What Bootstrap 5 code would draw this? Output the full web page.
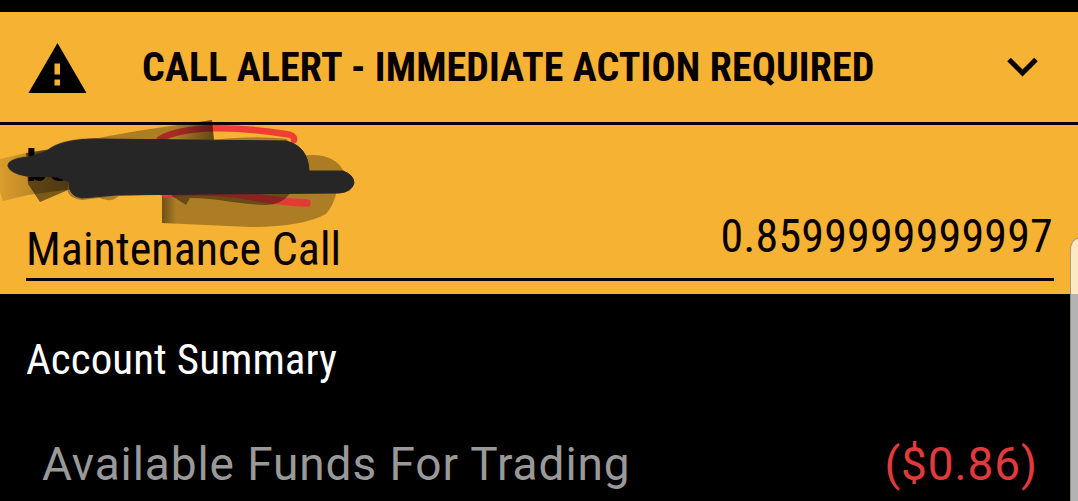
<!DOCTYPE html>
<html lang="en">
<head>
  <meta charset="UTF-8" />
  <meta name="viewport" content="width=device-width, initial-scale=1" />
  <title>Account Summary</title>
  <link href="https://cdn.jsdelivr.net/npm/bootstrap@5.3.0/dist/css/bootstrap.min.css" rel="stylesheet" />
  <style>
    body { background: #000; font-family: Roboto, sans-serif; height: 501px; padding-top: 12px; }
    .condensed { font-family: "Roboto Condensed", Roboto, sans-serif; font-stretch: 75%; }
    .call-alert { background: #f6b233; color: #080002; height: 282px; }
    .alert-bar { height: 113px; border-bottom: 3px solid #10000a; padding: 2px 39px 0 28px; }
    .alert-title { font-size: 40px; line-height: 48px; margin-left: 55px; letter-spacing: .11px; }
    .call-body { height: 156px; margin: 0 24px 0 26px; border-bottom: 3px solid #10000a; }
    .call-name { font-size: 46px; line-height: 54px; margin-bottom: 2px; letter-spacing: .08px; }
    .call-amount { font-size: 46px; line-height: 54px; margin-bottom: 15px; margin-right: 1px; letter-spacing: .17px; }
    .account-mask { left: 0; top: 110px; pointer-events: none; }
    .call-account { font-size: 44px; line-height: 54px; left: 0; top: 14px; }
    .summary-title { font-size: 43px; line-height: 50px; padding: 40px 0 0 26px; color: #fff; letter-spacing: .06px; }
    .funds-row { font-size: 46px; line-height: 54px; padding: 53px 40px 0 42px; color: #999; }
    .funds-label { letter-spacing: .91px; }
    .funds-value { color: #e23a3c; letter-spacing: .9px; }
    .edge-handle { right: 0; top: 238px; width: 8px; height: 263px; border: 1px solid rgba(130, 120, 105, .7); border-width: 1px 0 0 1px; border-top-left-radius: 8px 12px; background: rgba(255, 255, 255, .7); }
  </style>
</head>
<body class="position-relative overflow-hidden">

<section class="call-alert">
  <div class="alert-bar d-flex align-items-center">
    <svg width="59" height="52" viewBox="0 0 59 52" aria-hidden="true">
      <path fill="#000" fill-rule="evenodd" d="M29.5 1 58.5 51H.5ZM26.5 21.500V32.500H32V21.500ZM26.500 37.500V43.500H32V37.500Z" />
    </svg>
    <div class="alert-title condensed fw-bold text-nowrap">CALL ALERT - IMMEDIATE ACTION REQUIRED</div>
    <svg class="ms-auto" width="33" height="22" viewBox="0 0 33 22" aria-hidden="true">
      <path fill="none" stroke="#080002" stroke-width="5" d="M3 2.500 16.500 16 30 2.500" />
    </svg>
  </div>
  <div class="call-body position-relative d-flex justify-content-between align-items-end">
    <div class="call-account condensed fw-bold position-absolute">be</div>
    <div class="call-name condensed">Maintenance Call</div>
    <div class="call-amount condensed">0.8599999999997</div>
  </div>
</section>

<section>
  <div class="summary-title condensed">Account Summary</div>
  <div class="funds-row d-flex justify-content-between">
    <div class="funds-label">Available Funds For Trading</div>
    <div class="funds-value">($0.86)</div>
  </div>
</section>

<!-- marker strokes that hide the account name -->
<svg class="account-mask position-absolute" width="370" height="125" viewBox="0 110 370 125" aria-hidden="true">
  <defs>
    <linearGradient id="shadeLeft"><stop offset="0" stop-color="#000" stop-opacity=".12" /><stop offset="1" stop-color="#000" stop-opacity=".4" /></linearGradient>
    <linearGradient id="shadeRight"><stop offset="0" stop-color="#000" stop-opacity=".3" /><stop offset=".75" stop-color="#000" stop-opacity=".3" /><stop offset="1" stop-color="#000" stop-opacity=".6" /></linearGradient>
    <linearGradient id="shadeLow"><stop offset="0" stop-color="#000" stop-opacity=".55" /><stop offset=".08" stop-color="#000" stop-opacity=".3" /><stop offset="1" stop-color="#000" stop-opacity=".3" /></linearGradient>
  </defs>
  <path fill="none" stroke="#ef3e34" stroke-width="6.5" stroke-linecap="round" d="M160 139C185 125 235 126 286 134Q295 135 294 140" />
  <path fill="url(#shadeLeft)" d="M0 159 26 153 48 150 80 188 28 195 3 201 0 192Z" />
  <path fill="#000" fill-opacity=".5" d="M26 153 50 149 85 187 68 190 40 202 28 184Z" />
  <path fill="url(#shadeRight)" d="M60 146Q110 135 150 129L212 120 214 140 70 150Z" />
  <path fill="#000" fill-opacity=".3" d="M213 140Q255 135 287 139L290 145 213 145ZM300 156Q334 151 344 172L305 175Z" />
  <path fill="url(#shadeLow)" d="M162 190H337Q334 205 326 214Q302 227 250 227L162 223Z" />
  <path fill="none" stroke="#e33b34" stroke-width="7.5" stroke-linecap="round" d="M165 194Q215 189 253 197Q280 202 307 203" />
  <path fill="#000" fill-opacity=".4" d="M172 193 290 193Q282 205 265 205C237 204 215 198 190 198L186 205 172 196Z" />
  <path fill="#ad7d23" d="M98 197Q110 204 119 196Z" />
  <path fill="none" stroke="#725421" stroke-width="2" stroke-opacity=".6" d="M48 151C56 143 75 139 98 139M9 163Q14 158 30 157M8 165Q9 173 27 176L45 176M69 185Q66 197 82 199L116 195 145 194" />
  <path fill="#262626" stroke="#262626" d="M9 163Q14 158 30 157L47 151C56 143 75 139 98 139L286 141Q308 146 309 171L343 171Q354 175 354 183Q352 192 339 193L200 194 116 195 82 198Q67 196 70 182L57 177 27 176Q9 173 8 165Z" />
</svg>

<div class="edge-handle position-absolute"></div>

<script src="https://cdn.jsdelivr.net/npm/bootstrap@5.3.0/dist/js/bootstrap.bundle.min.js"></script>
</body>
</html>
